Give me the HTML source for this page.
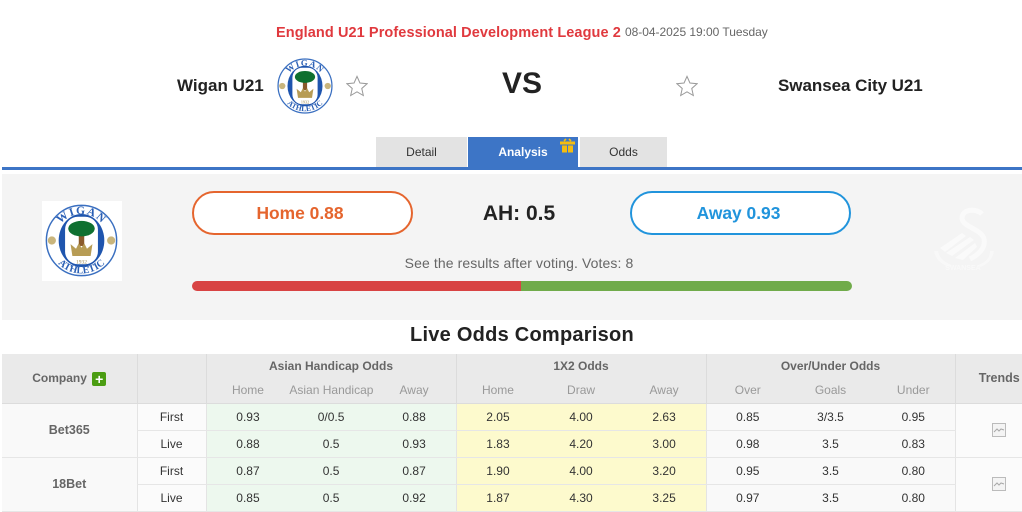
<!DOCTYPE html>
<html><head><meta charset="utf-8"><style>
html,body{margin:0;padding:0;background:#fff}
body{width:1022px;height:507px;overflow:hidden;position:relative;font-family:"Liberation Sans",sans-serif;color:#222}
.a{position:absolute;white-space:nowrap}
.c{text-align:center}
table{position:absolute;left:2px;top:354px;width:1041px;border-collapse:collapse;table-layout:fixed;font-size:12px;color:#333}
td{padding:0;text-align:center;border:0;overflow:hidden;white-space:nowrap}
tr.r td{height:26px;border-bottom:1px solid #e6e6e6}
.h{background:#eaeaea;color:#666;font-weight:bold}
.s{background:#eaeaea;color:#999;font-size:12px;border-bottom:1px solid #dcdcdc}
.bl{border-left:1px solid #dcdcdc!important}
.b2{border-left:1px solid #e4e4e4!important}
.g{background:#edf8ee}.y{background:#fdfacd}.w{background:#f9f9f9}
.co{background:#f9f9f9;color:#666;font-weight:bold;font-size:12.5px}
.f{background:#fbfbfb}
</style></head><body>

<div class="a" style="left:276px;top:25px;font-size:14.5px;font-weight:bold;color:#e0393e;letter-spacing:.09px">England U21 Professional Development League 2</div>
<div class="a" style="left:625px;top:25px;font-size:12px;color:#666;letter-spacing:-.03px">08-04-2025 19:00 Tuesday</div>

<div class="a" style="left:177px;top:76px;font-size:17px;font-weight:bold;color:#222">Wigan U21</div>
<svg class="a" style="left:277px;top:58px" width="56" height="56" viewBox="0 0 80 80">
<circle cx="40" cy="40" r="38.5" fill="#fff" stroke="#3a6fc0" stroke-width="1.8"/>
<ellipse cx="40" cy="40" rx="25" ry="29" fill="#1f55ae"/><rect x="22" y="14" width="36" height="52" rx="14" fill="#fff"/>
<rect x="37" y="33" width="6" height="13" fill="#8a5a2b"/><ellipse cx="40" cy="27" rx="14.5" ry="8.5" fill="#0f7030"/>
<path d="M28 44l6 5 3-6 3 5 3-5 3 6 6-5-2 13H30z" fill="#b79c55"/>
<text x="40" y="65" font-family="Liberation Serif" font-size="6" fill="#a08a50" text-anchor="middle">1932</text>
<circle cx="7.5" cy="40" r="4.5" fill="#c9b57c"/><circle cx="72.5" cy="40" r="4.5" fill="#c9b57c"/>
<path id="t1" d="M11 40a29 29 0 0 1 58 0" fill="none"/><path id="t2" d="M4 40a36 36 0 0 0 72 0" fill="none"/>
<text font-family="Liberation Serif" font-weight="bold" font-size="12.5" letter-spacing="1.5" fill="#2a5fb5" text-anchor="middle"><textPath href="#t1" startOffset="50%">WIGAN</textPath></text>
<text font-family="Liberation Serif" font-weight="bold" font-size="11" fill="#2a5fb5" text-anchor="middle"><textPath href="#t2" startOffset="50%">ATHLETIC</textPath></text>
</svg>
<svg class="a" style="left:346px;top:75px" width="22" height="22" viewBox="0 0 24 24"><path d="M12 1.5l3.2 7.2 7.8.8-5.8 5.2 1.7 7.7-6.9-4-6.9 4 1.7-7.7L1 9.5l7.8-.8z" fill="#fff" stroke="#9a9a9a" stroke-width="1.1"/></svg>
<div class="a" style="left:502px;top:67px;font-size:30px;font-weight:bold;color:#222">VS</div>
<svg class="a" style="left:676px;top:75px" width="22" height="22" viewBox="0 0 24 24"><path d="M12 1.5l3.2 7.2 7.8.8-5.8 5.2 1.7 7.7-6.9-4-6.9 4 1.7-7.7L1 9.5l7.8-.8z" fill="#fff" stroke="#9a9a9a" stroke-width="1.1"/></svg>
<div class="a" style="left:778px;top:76px;font-size:17px;font-weight:bold;color:#222;letter-spacing:-.05px">Swansea City U21</div>

<div class="a c" style="left:376px;top:137px;width:91px;height:30px;line-height:31px;background:#e3e3e3;font-size:12px;color:#333">Detail</div>
<div class="a c" style="left:468px;top:137px;width:110px;height:30px;line-height:31px;background:#3d75c6;font-size:12px;font-weight:bold;color:#fff">Analysis</div>
<svg class="a" style="left:560px;top:138px" width="15" height="16" viewBox="0 0 15 16"><path d="M4 3L6 1M11 3L9 1" stroke="#f5bd10" stroke-width="1.6"/><rect x="0" y="3.5" width="15" height="3" fill="#f5bd10"/><rect x="2" y="7.5" width="5" height="7" fill="#f5bd10"/><rect x="8" y="7.5" width="5" height="7" fill="#f5bd10"/></svg>
<div class="a c" style="left:580px;top:137px;width:87px;height:30px;line-height:31px;background:#e3e3e3;font-size:12px;color:#333">Odds</div>
<div class="a" style="left:2px;top:167px;width:1020px;height:3px;background:#3d75c6"></div>

<div class="a" style="left:2px;top:174px;width:1020px;height:146px;background:#f4f4f4"></div>
<div class="a" style="left:42px;top:201px;width:80px;height:80px;background:#fff"></div>
<svg class="a" style="left:45px;top:204px" width="73" height="73" viewBox="0 0 80 80">
<circle cx="40" cy="40" r="38.5" fill="#fff" stroke="#3a6fc0" stroke-width="1.6"/>
<ellipse cx="40" cy="40" rx="25" ry="29" fill="#1f55ae"/><rect x="22" y="14" width="36" height="52" rx="14" fill="#fff"/>
<rect x="37" y="33" width="6" height="13" fill="#8a5a2b"/><ellipse cx="40" cy="27" rx="14.5" ry="8.5" fill="#0f7030"/>
<path d="M28 44l6 5 3-6 3 5 3-5 3 6 6-5-2 13H30z" fill="#b79c55"/>
<text x="40" y="65" font-family="Liberation Serif" font-size="6" fill="#a08a50" text-anchor="middle">1932</text>
<circle cx="7.5" cy="40" r="4.5" fill="#c9b57c"/><circle cx="72.5" cy="40" r="4.5" fill="#c9b57c"/>
<path id="t3" d="M11 40a29 29 0 0 1 58 0" fill="none"/><path id="t4" d="M4 40a36 36 0 0 0 72 0" fill="none"/>
<text font-family="Liberation Serif" font-weight="bold" font-size="12.5" letter-spacing="1.5" fill="#2a5fb5" text-anchor="middle"><textPath href="#t3" startOffset="50%">WIGAN</textPath></text>
<text font-family="Liberation Serif" font-weight="bold" font-size="11" fill="#2a5fb5" text-anchor="middle"><textPath href="#t4" startOffset="50%">ATHLETIC</textPath></text>
</svg>

<div class="a c" style="left:192px;top:191px;width:212px;padding-right:5px;height:40px;line-height:41px;border:2px solid #e5652e;border-radius:22px;background:#fff;color:#e5652e;font-size:17.4px;font-weight:bold">Home 0.88</div>
<div class="a c" style="left:460px;top:202px;width:118px;font-size:21px;font-weight:bold;color:#222">AH: 0.5</div>
<div class="a c" style="left:630px;top:191px;width:213px;padding-right:4px;height:40px;line-height:41px;border:2px solid #2194dc;border-radius:22px;background:#fff;color:#2194dc;font-size:17.4px;font-weight:bold">Away 0.93</div>
<div class="a c" style="left:192px;top:255px;width:654px;font-size:14px;color:#666;letter-spacing:.1px">See the results after voting. Votes: 8</div>
<div class="a" style="left:192px;top:281px;width:329px;height:10px;background:#d84343;border-radius:5px 0 0 5px"></div>
<div class="a" style="left:521px;top:281px;width:331px;height:10px;background:#70ab4a;border-radius:0 5px 5px 0"></div>

<svg class="a" style="left:930px;top:205px" width="72" height="70" viewBox="0 0 72 70" fill="#fafafa">
<path d="M52 9C46 3 32 4 32 13C32 22 52 24 54 34C56 43 48 50 40 54" fill="none" stroke="#fafafa" stroke-width="5"/>
<path d="M10 43L32 28L36 31L15 47ZM16 48L40 32L44 35L22 51ZM25 53L45 38L47 42L33 55Z"/>
<path d="M4 46Q6 58 20 62L22 60Q10 56 8 46ZM64 46Q62 58 50 62L48 60Q60 56 60 46Z" opacity=".7"/>
<text x="33" y="65" font-size="7" font-weight="bold" fill="#f9f9f9" text-anchor="middle">SWANSEA</text>
</svg>

<div class="a" style="left:410px;top:324px;font-size:20px;font-weight:bold;color:#222;letter-spacing:.25px">Live Odds Comparison</div>

<table>
<colgroup><col style="width:135px"><col style="width:69px"><col style="width:83.4px"><col style="width:83.3px"><col style="width:83.3px"><col style="width:83.4px"><col style="width:83.3px"><col style="width:83.3px"><col style="width:83px"><col style="width:83px"><col style="width:83px"><col style="width:88px"></colgroup>
<tr style="height:24px">
<td class="h" rowspan="2" style="border-bottom:1px solid #dcdcdc">Company <span style="display:inline-block;width:14px;height:14px;background:#4b9d12;color:#fff;border-radius:2px;line-height:14px;font-size:14px;vertical-align:-2px;margin-left:2px">+</span></td>
<td class="h bl" rowspan="2" style="border-bottom:1px solid #dcdcdc"></td>
<td class="h bl" colspan="3">Asian Handicap Odds</td>
<td class="h bl" colspan="3">1X2 Odds</td>
<td class="h bl" colspan="3">Over/Under Odds</td>
<td class="h bl" rowspan="2" style="border-bottom:1px solid #dcdcdc;font-size:12.5px">Trends</td>
</tr>
<tr style="height:25px">
<td class="s bl">Home</td><td class="s">Asian Handicap</td><td class="s">Away</td>
<td class="s bl">Home</td><td class="s">Draw</td><td class="s">Away</td>
<td class="s bl">Over</td><td class="s">Goals</td><td class="s">Under</td>
</tr>
<tr class="r"><td class="co" rowspan="2">Bet365</td><td class="f b2">First</td>
<td class="g b2">0.93</td><td class="g">0/0.5</td><td class="g">0.88</td>
<td class="y b2">2.05</td><td class="y">4.00</td><td class="y">2.63</td>
<td class="w b2">0.85</td><td class="w">3/3.5</td><td class="w">0.95</td>
<td class="f b2" rowspan="2"><svg width="14" height="14" viewBox="0 0 14 14" style="vertical-align:middle"><rect x=".5" y=".5" width="13" height="13" fill="#f4f4f4" stroke="#bbb"/><path d="M2 9l3-3 2 2 2-2 3 1" fill="none" stroke="#a8a8a8"/></svg></td></tr>
<tr class="r"><td class="f b2">Live</td>
<td class="g b2">0.88</td><td class="g">0.5</td><td class="g">0.93</td>
<td class="y b2">1.83</td><td class="y">4.20</td><td class="y">3.00</td>
<td class="w b2">0.98</td><td class="w">3.5</td><td class="w">0.83</td></tr>
<tr class="r"><td class="co" rowspan="2">18Bet</td><td class="f b2">First</td>
<td class="g b2">0.87</td><td class="g">0.5</td><td class="g">0.87</td>
<td class="y b2">1.90</td><td class="y">4.00</td><td class="y">3.20</td>
<td class="w b2">0.95</td><td class="w">3.5</td><td class="w">0.80</td>
<td class="f b2" rowspan="2"><svg width="14" height="14" viewBox="0 0 14 14" style="vertical-align:middle"><rect x=".5" y=".5" width="13" height="13" fill="#f4f4f4" stroke="#bbb"/><path d="M2 9l3-3 2 2 2-2 3 1" fill="none" stroke="#a8a8a8"/></svg></td></tr>
<tr class="r"><td class="f b2">Live</td>
<td class="g b2">0.85</td><td class="g">0.5</td><td class="g">0.92</td>
<td class="y b2">1.87</td><td class="y">4.30</td><td class="y">3.25</td>
<td class="w b2">0.97</td><td class="w">3.5</td><td class="w">0.80</td></tr>
</table>
</body></html>
